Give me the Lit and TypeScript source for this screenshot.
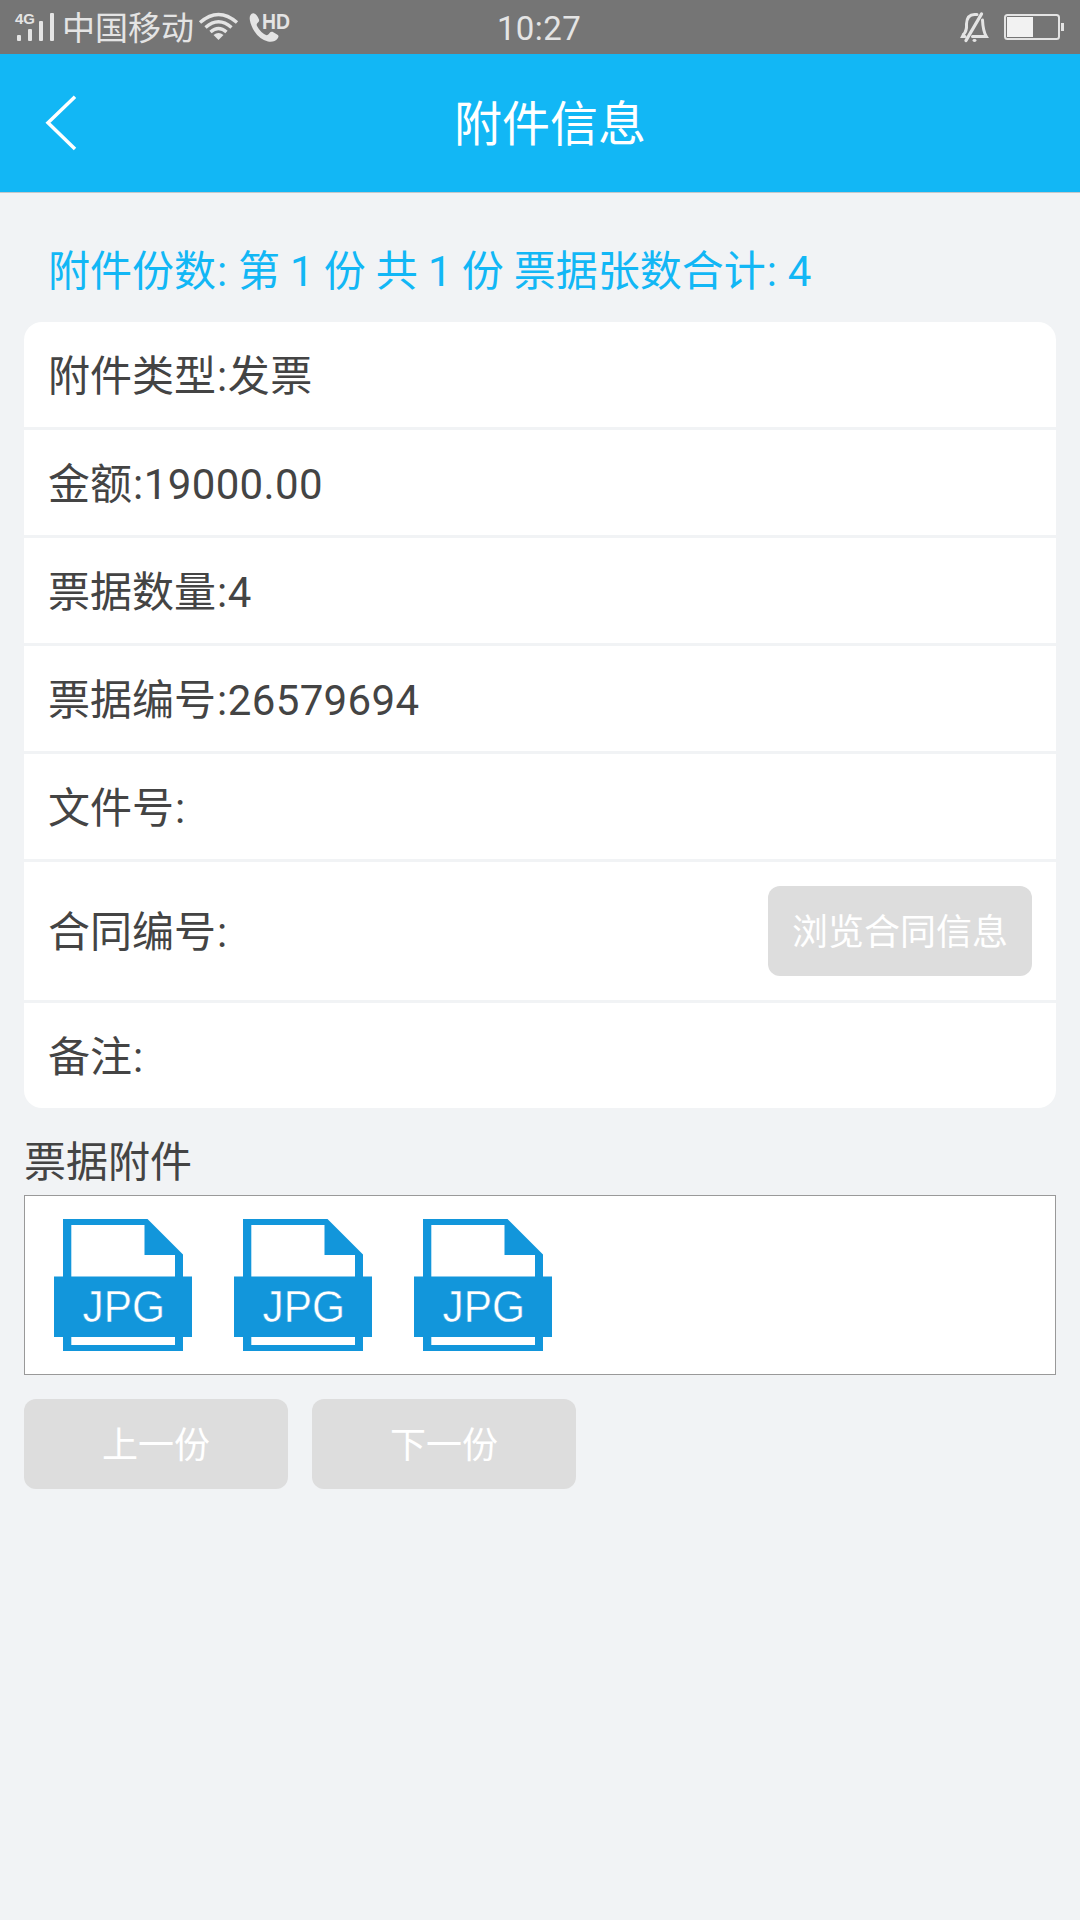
import { LitElement, html, css } from "lit";
import { customElement, property } from "lit/decorators.js";

@customElement("status-bar")
class StatusBar extends LitElement {
  static styles = css`
    :host {
      display: grid;
      grid-template-columns: 1fr auto 1fr;
      align-items: center;
      height: 54px;
      background: #757575;
      color: #e4e4e4;
      font-size: 33px;
      line-height: 50px;
    }
    svg {
      display: block;
      flex: none;
      overflow: visible;
    }
    .left,
    .right {
      display: flex;
      align-items: center;
    }
    .left {
      padding-left: 14px;
    }
    .carrier {
      padding-top: 4px;
      margin-left: 7px;
      white-space: nowrap;
    }
    .time {
      padding-top: 4px;
      letter-spacing: 0.4px;
      margin-left: -2px;
    }
    .wifi {
      margin-left: 4px;
    }
    .call {
      margin-left: 11px;
    }
    .right {
      justify-content: flex-end;
      padding-right: 16px;
    }
    .battery {
      margin-left: 15px;
    }
    .tag {
      font-family: "Liberation Sans", Arial, sans-serif;
      font-weight: bold;
    }
  `;

  render() {
    return html`
      <div class="left">
        <svg width="41" height="54" fill="#e4e4e4">
          <text class="tag" x="1" y="24" font-size="15" textLength="20">4G</text>
          <rect x="3" y="35" width="4" height="6" rx="1" />
          <rect x="14" y="29" width="4" height="12" rx="1" />
          <rect x="25" y="21" width="4" height="20" rx="1" />
          <rect x="36" y="13" width="4" height="28" rx="1" />
        </svg>
        <span class="carrier">中国移动</span>
        <svg class="wifi" width="40" height="54" fill="none" stroke="#e4e4e4" stroke-width="3.4">
          <path d="M2 22.500Q20.500 6.500 39 22.500" />
          <path d="M7.500 27.500Q20.500 16 33.500 27.500" />
          <path d="M12.500 32Q20.500 25 28.500 32" />
          <path d="M15.500 35Q20.500 31 25.500 35L20.500 40Z" fill="#e4e4e4" stroke="none" />
        </svg>
        <svg class="call" width="46" height="54" fill="#e4e4e4">
          <path
            d="M4.500 13.200Q7.500 13.500 10 19.500Q10.700 21.500 8.500 23Q7.200 24 8 26Q11.500 32.500 17 35Q18.700 35.500 19.800 34Q21.500 31 23.500 31.800L28.500 34.800Q30.500 36 28.600 38.500Q25.500 42.500 19 41.500Q9.500 39 4 29Q-1 19 1.500 15Q2.500 13 4.500 13.200Z"
          />
          <text class="tag" x="13" y="29" font-size="22" textLength="28" lengthAdjust="spacingAndGlyphs">HD</text>
        </svg>
      </div>
      <span class="time">10:27</span>
      <div class="right">
        <svg width="29" height="54" fill="none" stroke="#e4e4e4" stroke-width="3" stroke-linecap="round">
          <path d="M3.500 34.500Q7 31 6.500 24Q7 14.500 14.500 14.500H17" />
          <path d="M22.500 20Q23 31 26.300 36.500H12.500" />
          <path d="M3.500 34.500L2.500 36.500H5" />
          <path d="M21.500 14L6 40.500" stroke-width="3.300" />
          <ellipse cx="14.500" cy="40.500" rx="2" ry="1.400" fill="#e4e4e4" stroke="none" />
        </svg>
        <svg class="battery" width="60" height="54">
          <rect x="1" y="15" width="54" height="24" rx="2.500" fill="none" stroke="#e4e4e4" stroke-width="2" />
          <rect x="3" y="17" width="26" height="20" fill="#f2f2f2" />
          <rect x="57" y="23" width="3" height="8" fill="#e4e4e4" />
        </svg>
      </div>
    `;
  }
}

@customElement("jpg-file")
class JpgFile extends LitElement {
  static styles = css`
    :host {
      display: block;
      width: 138px;
      height: 132px;
    }
    svg {
      display: block;
    }
    .kind {
      font-family: "Liberation Sans", Arial, sans-serif;
      font-size: 45px;
      fill: #fff;
      stroke: #1296db;
      stroke-width: 0.5px;
    }
  `;

  render() {
    return html`
      <svg width="138" height="132" viewBox="0 0 138 132" fill="#1296db">
        <path
          fill-rule="evenodd"
          d="M9 0H93.500L129 35.500V132H9ZM17.300 6V126H121V36H90.500V6Z"
        />
        <rect x="0" y="57.500" width="138" height="60.500" />
        <text class="kind" x="28.500" y="103" textLength="82.500" lengthAdjust="spacingAndGlyphs">JPG</text>
      </svg>
    `;
  }
}

interface Field {
  label: string;
  value: string;
  action?: string;
}

@customElement("app-root")
class AppRoot extends LitElement {
  static styles = css`
    :host {
      display: flex;
      flex-direction: column;
      box-sizing: border-box;
      height: 1920px;
      background: #f1f3f5;
      color: #444;
      font-family: Roboto, "Noto Sans CJK SC", sans-serif;
      font-size: 42px;
      line-height: 60px;
    }
    .header {
      display: flex;
      align-items: center;
      height: 138px;
      padding-left: 45px;
      border-bottom: 1px solid #c4c8cb;
      background: #12b7f5;
      color: #fff;
    }
    .title {
      flex: 1;
      margin: 0;
      padding: 4px 59px 0 0;
      font-size: 48px;
      font-weight: 400;
      text-align: center;
    }
    .back {
      display: block;
      flex: none;
    }
    .summary {
      margin: 49px 48px 20px;
      color: #12b7f5;
      white-space: nowrap;
      word-spacing: -0.3px;
    }
    .colon {
      margin-left: 1px;
      letter-spacing: 0.6px;
    }
    .value {
      letter-spacing: 0.35px;
    }
    .card {
      display: flex;
      flex-direction: column;
      gap: 3px;
      margin: 0 24px;
      overflow: hidden;
      border-radius: 18px;
    }
    .row {
      display: flex;
      align-items: center;
      justify-content: space-between;
      min-height: 105px;
      padding: 0 24px;
      background: #fff;
    }
    .tall {
      min-height: 138px;
    }
    .text {
      padding-top: 4px;
    }
    .button {
      width: 264px;
      height: 90px;
      padding: 4px 0 0;
      border: 0;
      border-radius: 12px;
      background: #ddd;
      color: #fff;
      font: inherit;
      font-size: 36px;
    }
    .caption {
      margin: 25px 24px 2px;
    }
    .files {
      display: flex;
      box-sizing: border-box;
      gap: 42px;
      height: 180px;
      margin: 0 24px;
      padding: 23px 29px;
      border: 1px solid #999;
      background: #fff;
    }
    .pager {
      display: flex;
      gap: 24px;
      margin: 24px;
    }
  `;

  @property({ attribute: false })
  fields: Field[] = [
    { label: "附件类型", value: "发票" },
    { label: "金额", value: "19000.00" },
    { label: "票据数量", value: "4" },
    { label: "票据编号", value: "26579694" },
    { label: "文件号", value: "" },
    { label: "合同编号", value: "", action: "浏览合同信息" },
    { label: "备注", value: "" },
  ];

  render() {
    const colon = html`<span class="colon">:</span>`;
    return html`
      <status-bar></status-bar>
      <header class="header">
        <svg class="back" width="34" height="56" fill="none" stroke="#fff" stroke-width="3.500">
          <path d="M30 1.700L3 27.700L30 54" />
        </svg>
        <h1 class="title">附件信息</h1>
      </header>
      <div class="summary">附件份数${colon} 第 1 份 共 1 份 票据张数合计${colon} 4</div>
      <div class="card">
        ${this.fields.map(
          (f) => html`<div class="row ${f.action ? "tall" : ""}">
            <span class="text">${f.label}${colon}<span class="value">${f.value}</span></span>
            ${f.action ? html`<button class="button">${f.action}</button>` : ""}
          </div>`
        )}
      </div>
      <div class="caption">票据附件</div>
      <div class="files">${[1, 2, 3].map(() => html`<jpg-file></jpg-file>`)}</div>
      <div class="pager">
        <button class="button">上一份</button>
        <button class="button">下一份</button>
      </div>
    `;
  }
}
